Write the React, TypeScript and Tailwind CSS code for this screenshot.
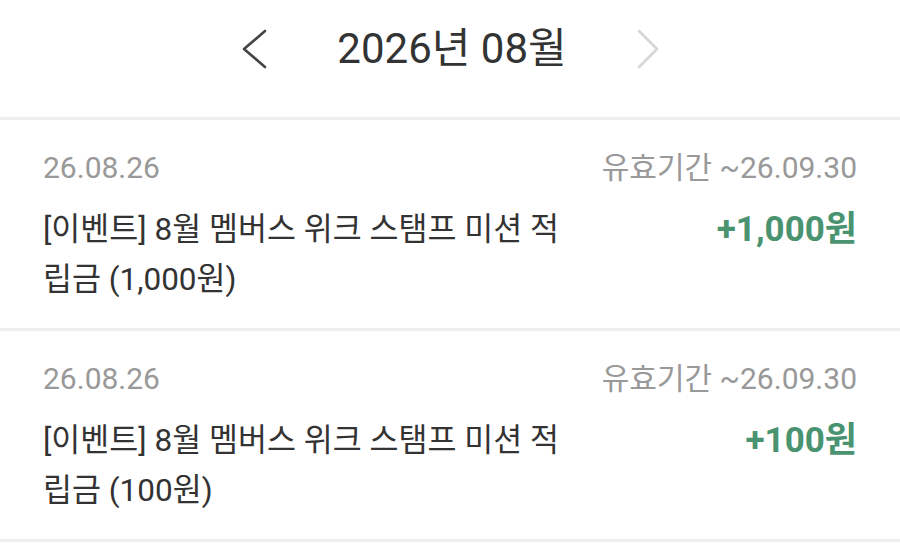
const items = [
  { date: "26.08.26", expire: "유효기간 ~26.09.30", title: "[이벤트] 8월 멤버스 위크 스탬프 미션 적립금 (1,000원)", amount: "+1,000원" },
  { date: "26.08.26", expire: "유효기간 ~26.09.30", title: "[이벤트] 8월 멤버스 위크 스탬프 미션 적립금 (100원)", amount: "+100원" },
];

function Chevron({ dir, color }: { dir: "left" | "right"; color: string }) {
  return (
    <svg width="26" height="42" viewBox="0 0 26 42" fill="none" className={color}>
      {dir === "left" ? (
        <polyline points="23,3 2,21 23,39" stroke="currentColor" strokeWidth="2.6" strokeLinecap="round" strokeLinejoin="round" />
      ) : (
        <polyline points="3,3 21,21 3,39" stroke="currentColor" strokeWidth="2.6" strokeLinecap="round" strokeLinejoin="round" />
      )}
    </svg>
  );
}

export default function App() {
  return (
    <div className="w-[900px] h-[545px] overflow-hidden bg-white text-[#333]" style={{ fontFamily: '"Roboto", "Noto Sans CJK KR", sans-serif' }}>
      {/* month header */}
      <div className="h-[117px] flex items-start justify-center pt-[27px]">
        <div className="flex items-center ml-[4px]">
          <Chevron dir="left" color="text-[#444]" />
          <div className="w-[368px] text-center text-[42px] leading-[44px] text-[#333]">2026년 08월</div>
          <Chevron dir="right" color="text-[#d6d6d6]" />
        </div>
      </div>
      <div className="h-[3px] bg-[#eeeeee]" />

      {items.map((it, i) => (
        <div key={i}>
          <div className="h-[208px] px-[43px] pt-[30px]">
            <div className="flex justify-between text-[30px] leading-[36px] text-[#999]">
              <span>{it.date}</span>
              <span>{it.expire}</span>
            </div>
            <div className="flex justify-between items-start mt-[19px]">
              <div className="w-[530px] break-all text-[31.5px] leading-[50px] text-[#333]">{it.title}</div>
              <div className="text-[35px] leading-[50px] font-bold text-[#4a9370]">{it.amount}</div>
            </div>
          </div>
          <div className="h-[3px] bg-[#eeeeee]" />
        </div>
      ))}
    </div>
  );
}
